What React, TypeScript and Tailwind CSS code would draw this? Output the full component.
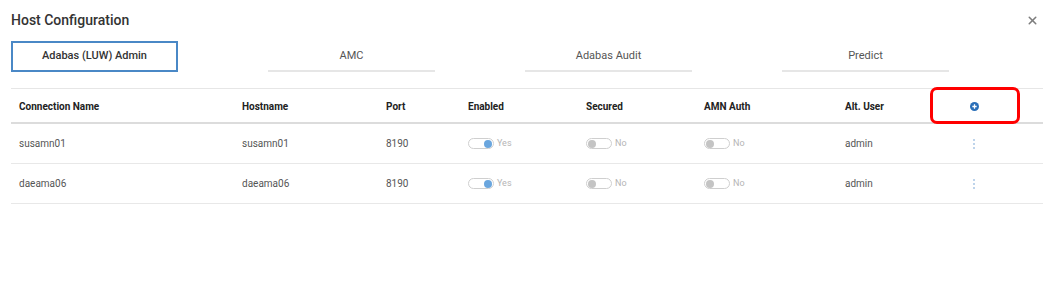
import { X } from "lucide-react";

type Row = {
  name: string;
  host: string;
  port: string;
  enabled: boolean;
  secured: boolean;
  amn: boolean;
  user: string;
};

const rows: Row[] = [
  { name: "susamn01", host: "susamn01", port: "8190", enabled: true, secured: false, amn: false, user: "admin" },
  { name: "daeama06", host: "daeama06", port: "8190", enabled: true, secured: false, amn: false, user: "admin" },
];

const tabs = ["Adabas (LUW) Admin", "AMC", "Adabas Audit", "Predict"];

const cols = "grid grid-cols-[223px_144px_82px_118px_118px_141px_93px_88px_13px]";

function Toggle({ on }: { on: boolean }) {
  return (
    <div className="flex items-center gap-[3px]">
      <div
        className={`flex h-[11px] w-[26px] items-center rounded-full border border-[#cfcfcf] bg-white px-[1px] ${
          on ? "justify-end" : "justify-start"
        }`}
      >
        <div className={`size-[8px] rounded-full ${on ? "bg-[#6aa6de]" : "bg-[#c4c4c4]"}`} />
      </div>
      <span className="text-[9px] text-[#b5b5b5]">{on ? "Yes" : "No"}</span>
    </div>
  );
}

export default function App() {
  return (
    <div className="h-[288px] w-[1054px] bg-white font-['Roboto',sans-serif]">
      <div className="flex items-center justify-between pl-[11px] pr-[17px] pt-[11px]">
        <div className="text-[14px] font-medium leading-[18px] text-[#333]">Host Configuration</div>
        <X size={13} strokeWidth={2.8} className="mr-[-2px] text-[#7d7d7d]" />
      </div>

      <div className="mt-[12px] flex gap-[90px] pl-[11px]">
        {tabs.map((tab, i) => (
          <div
            key={tab}
            className={`flex h-[31px] w-[167px] items-center justify-center text-[11px] ${
              i === 0
                ? "border-2 border-[#4a88c6] font-medium text-[#333]"
                : "border-b-2 border-[#e6e6e6] pt-[1px] text-[#555]"
            }`}
          >
            {tab}
          </div>
        ))}
      </div>

      <div className="relative mx-[11px] mt-[16px] border-t border-[#e6e6e6] text-[10px]">
        <div className={`${cols} h-[35px] items-center border-b-2 border-[#dcdcdc] pt-[1px] font-bold text-[#222]`}>
          <div className="pl-[8px]">Connection Name</div>
          <div className="pl-[8px]">Hostname</div>
          <div className="pl-[8px]">Port</div>
          <div className="pl-[8px]">Enabled</div>
          <div className="pl-[8px]">Secured</div>
          <div className="pl-[8px]">AMN Auth</div>
          <div className="pl-[8px]">Alt. User</div>
          <div className="flex justify-center">
            <svg width="9" height="9" viewBox="0 0 10 10">
              <circle cx="5" cy="5" r="5" fill="#2a6fb8" />
              <path d="M5 2.6v4.8M2.6 5h4.8" stroke="#fff" strokeWidth="1.4" />
            </svg>
          </div>
          <div />
        </div>

        {rows.map((r) => (
          <div key={r.name} className={`${cols} h-[40px] items-center border-b border-[#e8e8e8] text-[#555]`}>
            <div className="pl-[8px]">{r.name}</div>
            <div className="pl-[8px]">{r.host}</div>
            <div className="pl-[8px]">{r.port}</div>
            <div className="pl-[8px]">
              <Toggle on={r.enabled} />
            </div>
            <div className="pl-[8px]">
              <Toggle on={r.secured} />
            </div>
            <div className="pl-[8px]">
              <Toggle on={r.amn} />
            </div>
            <div className="pl-[8px]">{r.user}</div>
            <div className="flex flex-col items-center gap-[2px]">
              <span className="size-[2px] rounded-full bg-[#a9c6e4]" />
              <span className="size-[2px] rounded-full bg-[#a9c6e4]" />
              <span className="size-[2px] rounded-full bg-[#a9c6e4]" />
            </div>
            <div />
          </div>
        ))}

        <div className="absolute left-[919px] top-[-2px] h-[37px] w-[90px] rounded-[7px] border-[3px] border-[#f00]" />
      </div>
    </div>
  );
}
